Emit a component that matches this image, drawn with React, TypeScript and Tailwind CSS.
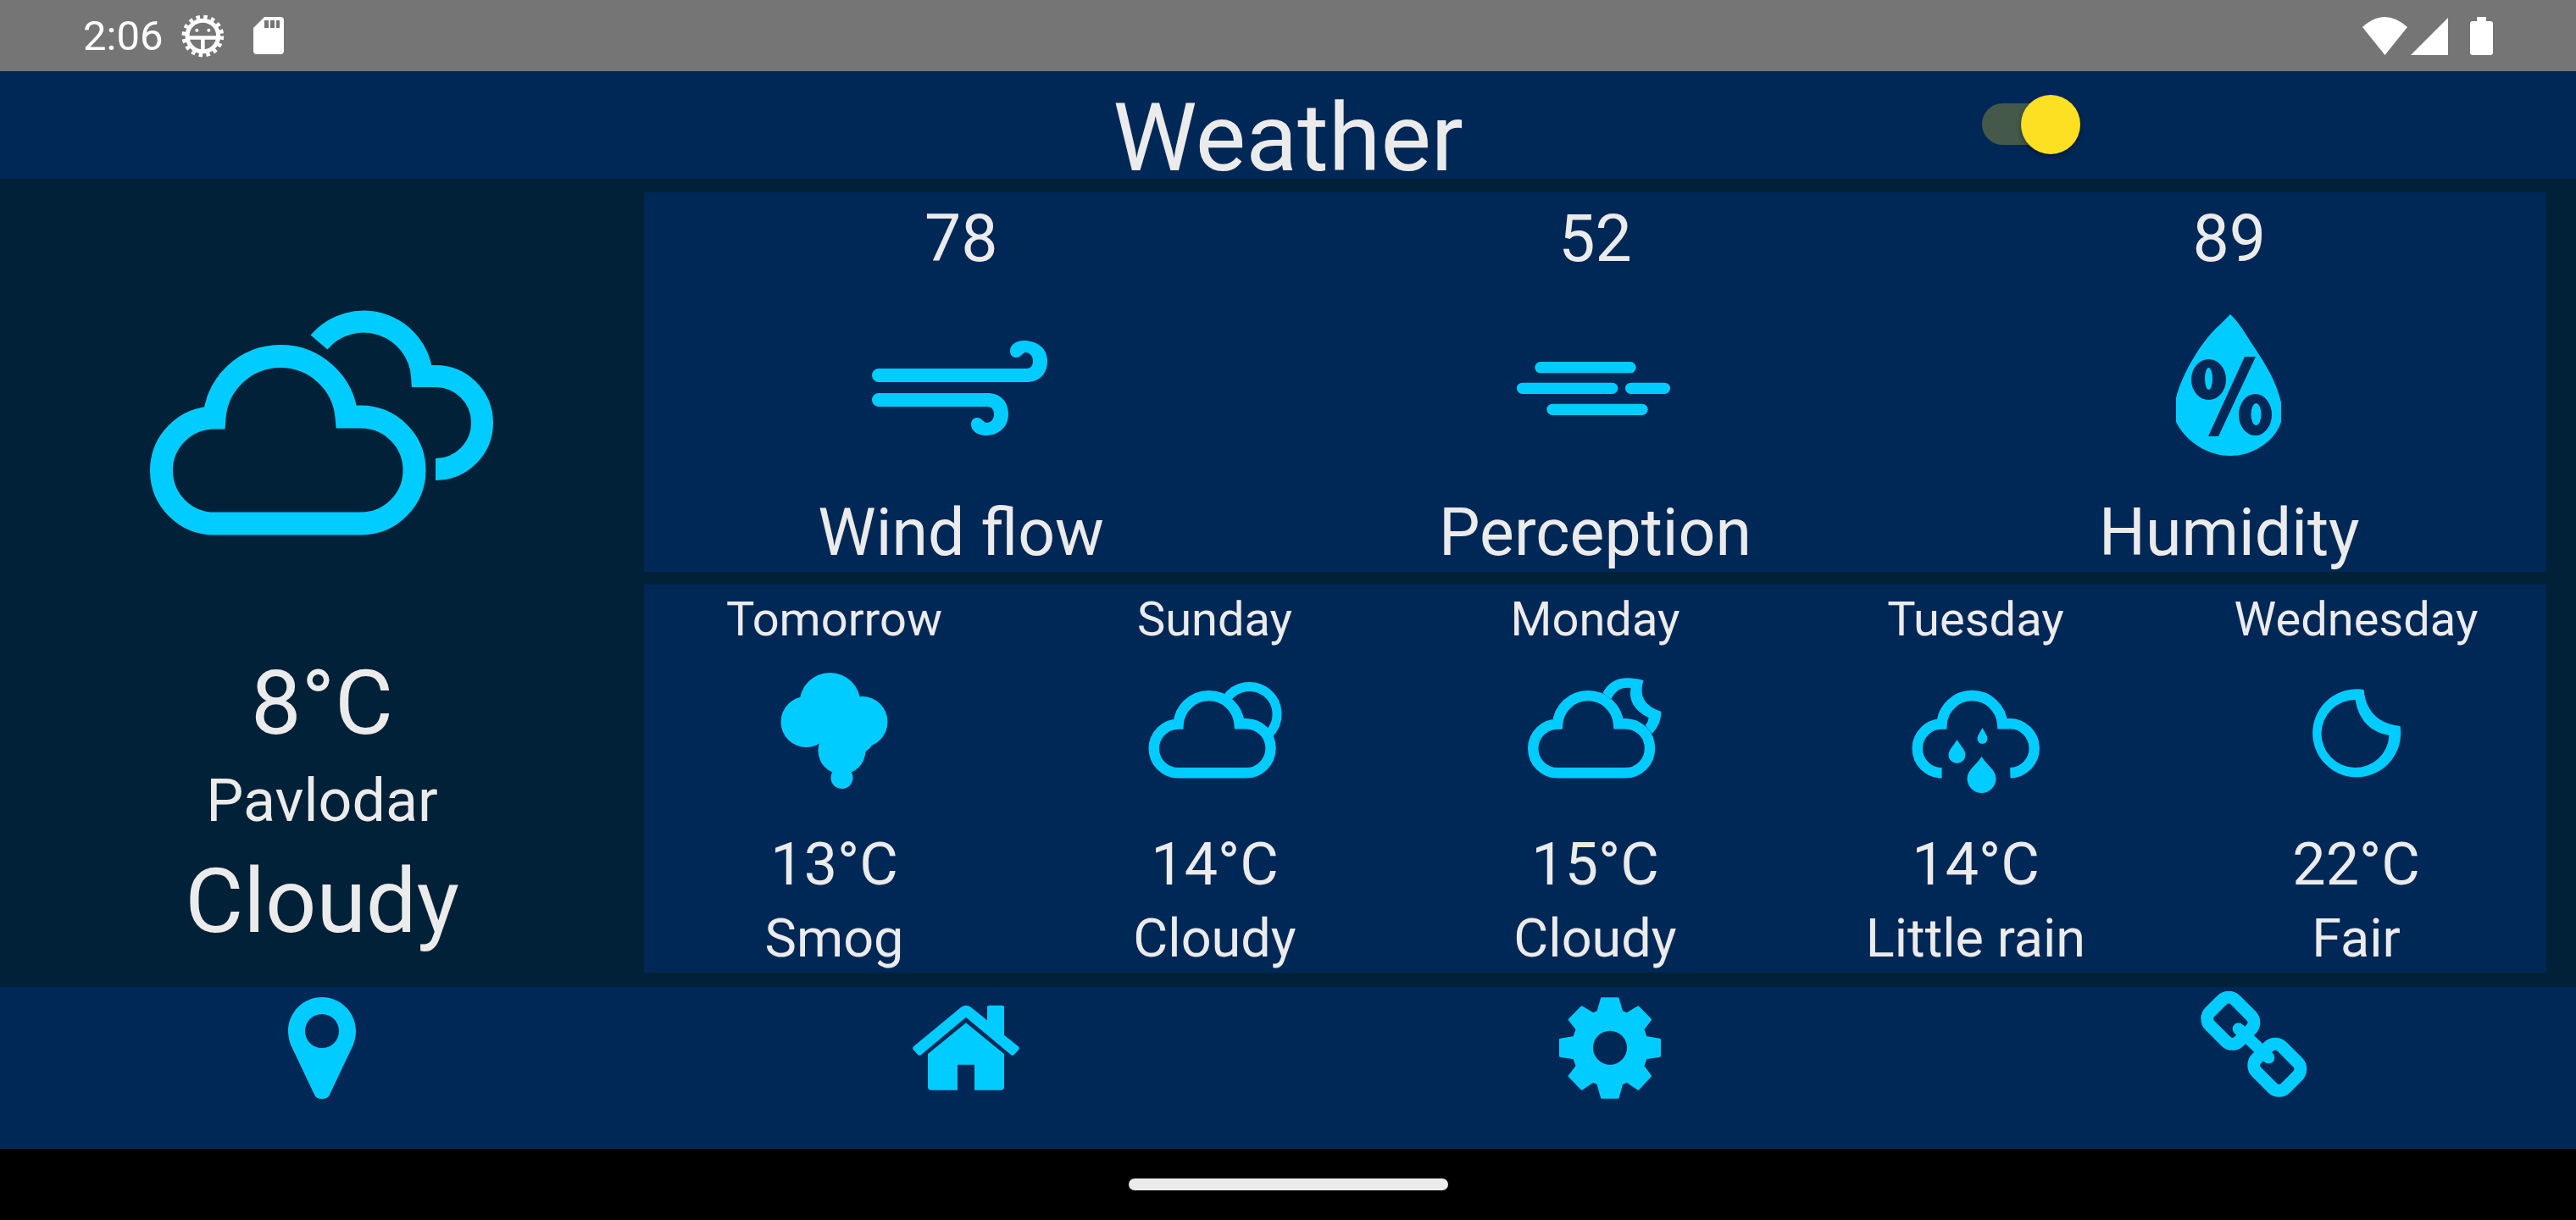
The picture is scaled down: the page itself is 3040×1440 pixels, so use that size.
const CYAN = '#00ccff';
const NAVY = '#002856';

const frontCloud = 'M75 252 H248 A63 63 0 0 0 248 126 H231 A78.25 78.25 0 0 0 75 127 A62.5 62.5 0 0 0 75 252 Z';

const Drop = ({ c, t, b, w }: { c: number; t: number; b: number; w: number }) => {
  const r = w / 2;
  const h = b - t;
  const d = `M${c} ${t} C${c + r * 0.4} ${t + h * 0.25} ${c + r} ${b - r * 1.6} ${c + r} ${b - r} A${r} ${r} 0 0 1 ${c - r} ${b - r} C${c - r} ${b - r * 1.6} ${c - r * 0.4} ${t + h * 0.25} ${c} ${t} Z`;
  return <path d={d} fill={CYAN} />;
};

const SmogIcon = () => (
  <svg viewBox="885.5 772 198 198" className="h-[198px] w-[198px]" fill={CYAN}>
    <circle cx="979" cy="830" r="36" />
    <circle cx="951" cy="852" r="30" />
    <circle cx="1017" cy="852" r="30" />
    <circle cx="1000" cy="858" r="36" />
    <circle cx="993" cy="886" r="28" />
    <circle cx="993" cy="918" r="13" />
  </svg>
);

const CloudSunIcon = () => (
  <svg viewBox="1334.5 772 198 198" className="h-[198px] w-[198px]" fill="none" stroke={CYAN}>
    <path d="M1447 825 A32.5 32.5 0 1 1 1497 866" strokeWidth="11" />
    <path d={frontCloud} strokeWidth="27" fill={NAVY} transform="translate(1355.5 796) scale(0.4615)" />
  </svg>
);

const CloudMoonIcon = () => (
  <svg viewBox="1783.5 772 198 198" className="h-[198px] w-[198px]" fill="none" stroke={CYAN}>
    <path
      d="M1891 818 Q1903 793 1939 803 Q1930 830 1960 840 Q1960 855 1949 866 L1941 856 Q1945 852 1945 847 Q1920 835 1924 812 Q1908 810 1901 825 Z"
      fill={CYAN}
      stroke="none"
    />
    <path d={frontCloud} strokeWidth="27" fill={NAVY} transform="translate(1803 796) scale(0.4615)" />
  </svg>
);

const RainIcon = () => (
  <svg viewBox="2232.5 772 198 198" className="h-[198px] w-[198px]" fill="none">
    <path
      d="M76 252 A62.5 62.5 0 0 1 76 127 A77.7 77.7 0 0 1 231 126 H248 A63 63 0 0 1 251 252"
      stroke={CYAN}
      strokeWidth="27"
      transform="translate(2256 796) scale(0.4615)"
    />
    <Drop c={2339} t={859} b={878} w={12} />
    <Drop c={2309} t={873} b={901} w={20} />
    <Drop c={2338} t={893} b={936} w={34} />
  </svg>
);

const MoonIcon = () => (
  <svg viewBox="2681.5 772 198 198" className="h-[198px] w-[198px]">
    <path
      fillRule="evenodd"
      fill={CYAN}
      d="M2789 814 A52 52 0 1 0 2832 857 Q2793 853 2789 814 Z M2779 826 A40 40 0 1 0 2819 868 Q2785 862 2779 826 Z"
    />
  </svg>
);

const WindIcon = () => (
  <svg viewBox="1025 395 220 125" className="h-[125px] w-[220px]" fill={CYAN}>
    <path d="M1038 434 H1212 C1218 434 1220 430 1220 425 C1220 418 1215 415 1211 415 C1207 416 1206 421 1200 421 C1195 421 1193 417 1193 413 C1193 406 1200 401 1209 401 C1225 401 1237 410 1237 425 C1237 440 1228 450 1212 450 H1038 A8 8 0 0 1 1038 434 Z" />
    <path d="M1038 463 H1166 C1182 463 1191 473 1191 488 C1191 503 1179 513 1165 513 C1154 513 1147 507 1147 500 C1147 496 1149 492 1154 492 C1160 492 1161 497 1165 498 C1169 498 1174 495 1174 488 C1174 483 1172 479 1166 479 H1038 A8 8 0 0 1 1038 463 Z" />
  </svg>
);

const PerceptionIcon = () => (
  <svg viewBox="9 9 660 330" className="h-[110px] w-[220px]" stroke={CYAN} strokeWidth="40" strokeLinecap="round">
    <path d="M147 101 H465" />
    <path d="M83 175 H401" />
    <path d="M467 175 H586" />
    <path d="M189 250 H507" />
  </svg>
);

const HumidityIcon = () => (
  <svg viewBox="2561 368 140 180" className="h-[180px] w-[140px]">
    <path
      fill={CYAN}
      d="M2632 371 Q2640 378 2650 394 C2670 425 2685 445 2692 475 V498 C2685 520 2660 538 2632 538 C2604 538 2579 520 2568 498 V470 C2575 440 2600 400 2620 383 Z"
    />
    <ellipse cx="2606.5" cy="448" rx="20.5" ry="24" fill={NAVY} />
    <ellipse cx="2606.5" cy="447" rx="4.5" ry="13" fill={CYAN} />
    <ellipse cx="2661.5" cy="489.5" rx="19.5" ry="24.5" fill={NAVY} />
    <ellipse cx="2662.5" cy="489" rx="6" ry="13" fill={CYAN} />
    <path d="M2649 421 H2662 L2618 515 H2606 Z" fill={NAVY} />
  </svg>
);

const PinIcon = () => (
  <svg viewBox="0 0 480 480" className="h-[160px] w-[160px]" fill={CYAN}>
    <path
      fillRule="evenodd"
      d="M240 36 C306 36 360 90 360 156 C360 172 356 190 351 204 L267 381 Q262 396 240 396 Q218 396 213 381 L129 204 C124 190 120 172 120 156 C120 90 174 36 240 36 Z M240 96 A60 60 0 1 0 240 216 A60 60 0 1 0 240 96 Z"
    />
  </svg>
);

const HomeIcon = () => (
  <svg viewBox="0 -15 480 480" className="h-[160px] w-[160px]" fill={CYAN}>
    <path d="M105 222 L240 112 L375 222 V338 Q375 350 363 350 H270 V260 H210 V350 H117 Q105 350 105 338 Z" />
    <path d="M54 196 L222 57 Q240 44 258 57 L315 103 V56 Q315 50 321 50 H369 Q375 50 375 56 V155 L426 196 Q431 201 427 206 L411 224 Q405 230 399 225 L240 92 L81 225 Q75 230 69 224 L53 206 Q49 201 54 196 Z" />
  </svg>
);

const GearIcon = () => (
  <svg viewBox="0 15 480 480" className="h-[160px] w-[160px]">
    <path
      fill={CYAN}
      stroke={CYAN}
      strokeWidth="8"
      strokeLinejoin="round"
      d="M211 56 H268 L282 103 L300 110 L340 86 L383 130 L357 165 L367 193 L416 201 V259 L367 267 L357 295 L383 330 L340 376 L300 349 L282 357 L268 406 H211 L197 357 L180 349 L140 376 L96 330 L123 295 L113 267 L64 259 V201 L113 193 L123 165 L96 130 L140 86 L180 110 L197 103 Z"
    />
    <circle cx="240" cy="230" r="60" fill={NAVY} />
  </svg>
);

const LinkIcon = () => (
  <svg viewBox="0 30 480 480" className="h-[160px] w-[160px]" fill="none" stroke={CYAN} strokeWidth="45">
    <rect x="-73" y="-63.5" width="146" height="127" rx="34" transform="translate(157 149) rotate(45)" />
    <rect x="-73" y="-63.5" width="146" height="127" rx="34" transform="translate(322 314) rotate(45)" />
    <path d="M185 178 L292 280" strokeWidth="42" strokeLinecap="round" />
  </svg>
);

const StatusBar = () => (
  <div className="flex h-[84px] items-center justify-between bg-[#757575] pl-[98px] pr-[95px] text-white">
    <div className="flex items-center">
      <span className="text-[49px] leading-none font-['Roboto',sans-serif]">2:06</span>
      <svg viewBox="0 0 237 200" className="ml-[8px] h-[67px] w-[79px]">
        <circle cx="118" cy="100" r="66" fill="none" stroke="#fff" strokeWidth="17" strokeDasharray="13 13" />
        <circle cx="118" cy="100" r="55" fill="none" stroke="#fff" strokeWidth="15" />
        <path d="M60 106 H176 M118 106 V160" stroke="#fff" strokeWidth="14" />
        <circle cx="97" cy="80" r="6" fill="#fff" />
        <circle cx="139" cy="80" r="6" fill="#fff" />
      </svg>
      <svg viewBox="0 0 36 44" className="ml-[20px] h-[44px] w-[36px]">
        <path d="M13 0 H32 Q36 0 36 4 V40 Q36 44 32 44 H4 Q0 44 0 40 V13 Z" fill="#fff" />
        <path d="M13 4 H18 V13 H13 Z M20 4 H25 V13 H20 Z M27 4 H31 V13 H27 Z" fill="#757575" />
      </svg>
    </div>
    <svg viewBox="2785 18 160 50" className="h-[50px] w-[160px]" fill="#fff">
      <path d="M2788 33 Q2814 9 2841 33 L2814.5 66 Z" />
      <path d="M2845 66 L2889 22 V66 Z" />
      <path d="M2923 21 H2934 V26 H2939 Q2942 26 2942 29 V63 Q2942 66 2939 66 H2918 Q2915 66 2915 63 V29 Q2915 26 2918 26 H2923 Z" />
    </svg>
  </div>
);

const metrics = [
  { value: '78', label: 'Wind flow', icon: <WindIcon /> },
  { value: '52', label: 'Perception', icon: <PerceptionIcon /> },
  { value: '89', label: 'Humidity', icon: <HumidityIcon /> },
];

const days = [
  { day: 'Tomorrow', temp: '13°C', text: 'Smog', icon: <SmogIcon /> },
  { day: 'Sunday', temp: '14°C', text: 'Cloudy', icon: <CloudSunIcon /> },
  { day: 'Monday', temp: '15°C', text: 'Cloudy', icon: <CloudMoonIcon /> },
  { day: 'Tuesday', temp: '14°C', text: 'Little rain', icon: <RainIcon /> },
  { day: 'Wednesday', temp: '22°C', text: 'Fair', icon: <MoonIcon /> },
];

export default function App() {
  return (
    <div className="flex h-[1440px] w-[3040px] flex-col overflow-hidden bg-black font-['Roboto',sans-serif] text-[#ebebeb]">
      <StatusBar />

      <header className="grid h-[127px] grid-cols-3 bg-[#002856]">
        <div />
        <h1 className="h-[127px] text-center text-[112px] leading-[158px]">Weather</h1>
        <div className="pl-[312px] pt-[28px]">
          <div className="relative mt-[10px] h-[49px] w-[106px] rounded-full bg-[#44594a]">
            <div className="absolute left-[46px] top-[-10px] h-[70px] w-[70px] rounded-full bg-[#fde021] shadow-[0_3px_6px_rgba(0,0,0,0.35)]" />
          </div>
        </div>
      </header>

      <main className="flex h-[954px] bg-[#002137]">
        <section className="flex w-[760px] flex-col items-center pt-[155px]">
          <svg viewBox="0 0 405 266" className="h-[266px] w-[405px] overflow-visible" fill="none" stroke={CYAN}>
            <path d="M198.5 38 A69 69 0 0 1 320 78 H336 A55 55 0 0 1 336 188" strokeWidth="26" />
            <path d={frontCloud} strokeWidth="27" />
          </svg>
          <div className="mt-[138px] flex h-[120px] items-center text-[106px]">8°C</div>
          <div className="flex h-[110px] items-center text-[70px]">Pavlodar</div>
          <div className="flex h-[128px] items-center text-[106px]">Cloudy</div>
        </section>

        <section className="flex w-[2245px] flex-col pt-[16px]">
          <div className="grid h-[448px] grid-cols-3 bg-[#002856]">
            {metrics.map((m) => (
              <div key={m.label} className="flex flex-col items-center">
                <div className="flex h-[112px] items-center text-[77px]">{m.value}</div>
                <div className="flex flex-1 items-center justify-center pb-[8px]">{m.icon}</div>
                <div className="flex h-[90px] items-center text-[77px]">{m.label}</div>
              </div>
            ))}
          </div>
          <div className="mt-[15px] grid h-[458px] grid-cols-5 bg-[#002856]">
            {days.map((d) => (
              <div key={d.day} className="flex flex-col items-center">
                <div className="flex h-[82px] items-center text-[56px]">{d.day}</div>
                {d.icon}
                <div className="flex h-[100px] items-center text-[70px]">{d.temp}</div>
                <div className="flex h-[77px] items-center text-[63px]">{d.text}</div>
              </div>
            ))}
          </div>
        </section>
      </main>

      <nav className="grid h-[191px] grid-cols-4 bg-[#002856]">
        <div className="flex justify-center"><PinIcon /></div>
        <div className="flex justify-center"><HomeIcon /></div>
        <div className="flex justify-center"><GearIcon /></div>
        <div className="flex justify-center"><LinkIcon /></div>
      </nav>

      <div className="flex flex-1 items-center justify-center">
        <div className="h-[14px] w-[377px] rounded-full bg-[#ebebeb]" />
      </div>
    </div>
  );
}
